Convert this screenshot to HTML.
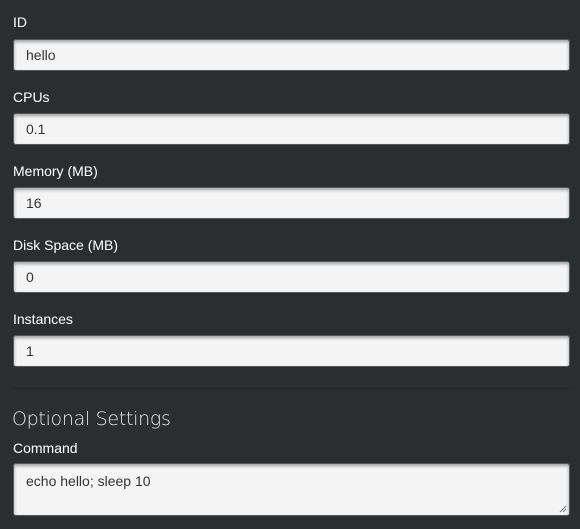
<!DOCTYPE html>
<html><head><style>
body{margin:0;background:#2b2e31;width:580px;height:529px;overflow:hidden;font-family:"Liberation Sans",sans-serif;position:relative}
.l{position:absolute;left:13px;color:#fff;font-size:14px;line-height:16px}
.i{position:absolute;left:13px;background:#f4f4f4;border:1px solid #55595c;border-radius:3px;box-shadow:inset 0 2px 3px rgba(0,0,0,.35);color:#333;font-size:14px;line-height:30px;padding-left:12px;box-sizing:border-box;width:557px;height:32px}
</style></head><body>
<div class="l" style="top:14px">ID</div>
<div class="i" style="top:39px">hello</div>
<div class="l" style="top:89px">CPUs</div>
<div class="i" style="top:113px">0.1</div>
<div class="l" style="top:163px">Memory (MB)</div>
<div class="i" style="top:187px">16</div>
<div class="l" style="top:237px">Disk Space (MB)</div>
<div class="i" style="top:261px">0</div>
<div class="l" style="top:311px">Instances</div>
<div class="i" style="top:335px">1</div>
<div style="position:absolute;left:13px;width:557px;top:388px;height:1px;background:#222427"></div>
<div style="position:absolute;left:12px;top:408px;color:#e6e6e6;font-size:19px;font-weight:300;font-family:'DejaVu Sans','Liberation Sans',sans-serif;letter-spacing:-0.3px">Optional Settings</div>
<div class="l" style="top:440px">Command</div>
<div class="i" style="top:463px;height:53px;line-height:16px;padding-top:9px">echo hello; sleep 10
<svg width="8" height="8" style="position:absolute;right:2px;bottom:2px"><path d="M1 7L7 1M4 7L7 4" stroke="#777" stroke-width="1"/></svg></div>
</body></html>
